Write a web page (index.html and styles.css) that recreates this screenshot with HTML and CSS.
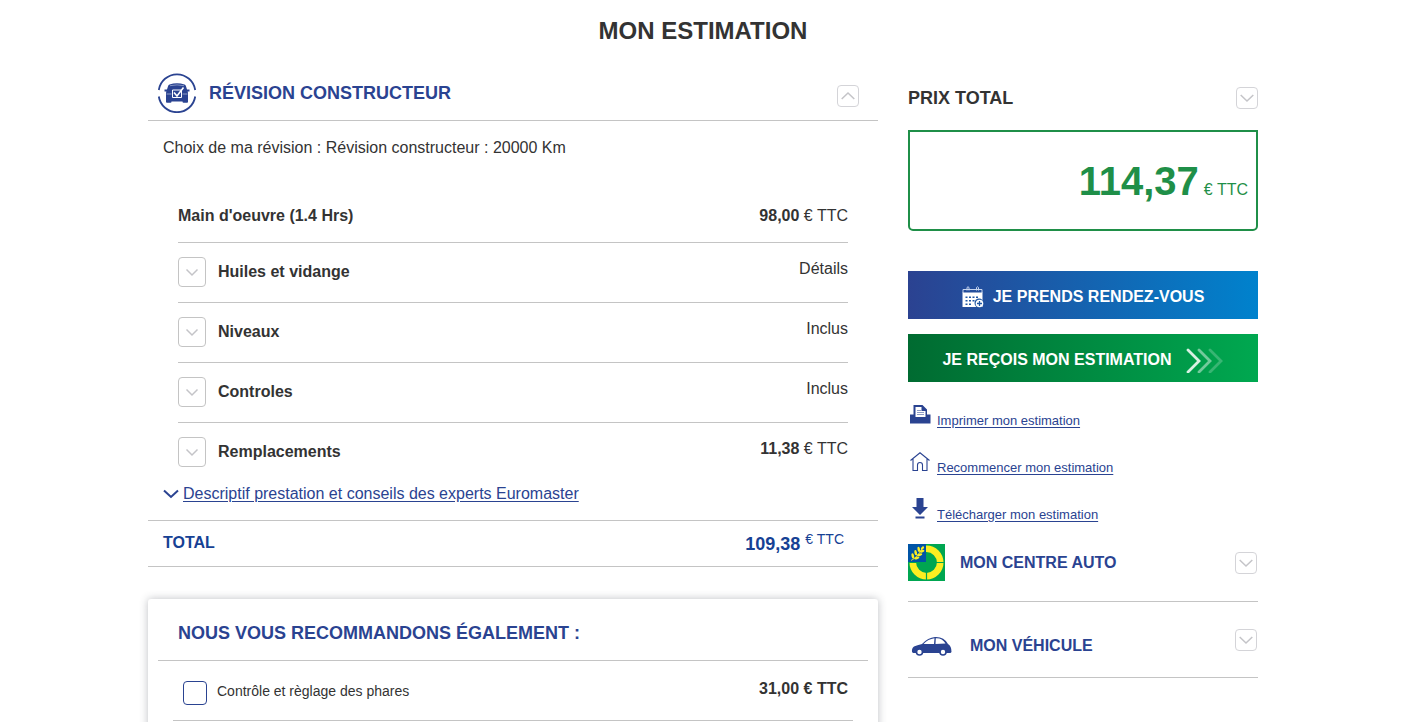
FILE: index.html
```
<!DOCTYPE html>
<html lang="fr">
<head>
<meta charset="utf-8">
<title>Mon estimation</title>
<link rel="stylesheet" href="styles.css">
</head>
<body>
<div class="page">
  <h1 class="page-title">MON ESTIMATION</h1>
  <div class="layout">
    <main class="main">
      <section>
        <header class="section-head">
          <svg class="revision-icon" viewBox="0 0 40 40" aria-hidden="true">
            <g fill="none" stroke="#2a4391" stroke-width="1.8"><path d="M1.800 17A18.400 18.400 0 0 1 38.200 17"/><path d="M1.800 23.500A18.400 18.400 0 0 0 38.200 23.500"/></g>
            <path fill="#2a4391" d="M12.500 11.500q7.500-2.500 15 0 1 .3 1.400 1.500l1.600 5 .5 2v9q0 .8-1 .8h-3.500q-1 0-1-1.300h-11q0 1.300-1 1.300H10q-1 0-1-.8v-9l.5-2 1.600-5q.4-1.200 1.400-1.500zM7.500 16.500h3v2h-3zM29.500 16.500h3v2h-3z"/>
            <path d="M13 12.700q7-1.600 14 0" fill="none" stroke="#a9b5d6" stroke-width=".7"/>
            <path d="M9.500 21h5M25.500 21h5" stroke="#a9b5d6" stroke-width=".8"/>
            <path d="M15.500 17h9v7.500h-9z" fill="#2a4391" stroke="#fff"/>
            <path d="M17 19.500l3 3.500 6.500-8.500" fill="none" stroke="#fff" stroke-width="1.600"/>
          </svg>
          <h2 class="heading">RÉVISION CONSTRUCTEUR</h2>
          <button class="toggle toggle-top" type="button" aria-label="Replier"><svg viewBox="0 0 14 8" width="14" height="8"><path d="M.7 7L7 1l6.300 6"/></svg></button>
        </header>
        <p class="choice">Choix de ma révision : Révision constructeur : 20000 Km</p>
        <ul class="rows">
          <li class="row labour"><strong>Main d'oeuvre (1.4 Hrs)</strong><span><b>98,00</b> € TTC</span></li>
          <li class="row"><button class="expand" type="button" aria-label="Déplier Huiles et vidange"><svg viewBox="0 0 12 7" width="12" height="7"><path d="M.5 .5L6 6l5.500-5.500"/></svg></button><strong class="label">Huiles et vidange</strong><span class="value">Détails</span></li>
          <li class="row"><button class="expand" type="button" aria-label="Déplier Niveaux"><svg viewBox="0 0 12 7" width="12" height="7"><path d="M.5 .5L6 6l5.500-5.500"/></svg></button><strong class="label">Niveaux</strong><span class="value">Inclus</span></li>
          <li class="row"><button class="expand" type="button" aria-label="Déplier Controles"><svg viewBox="0 0 12 7" width="12" height="7"><path d="M.5 .5L6 6l5.500-5.500"/></svg></button><strong class="label">Controles</strong><span class="value">Inclus</span></li>
          <li class="row"><button class="expand" type="button" aria-label="Déplier Remplacements"><svg viewBox="0 0 12 7" width="12" height="7"><path d="M.5 .5L6 6l5.500-5.500"/></svg></button><strong class="label">Remplacements</strong><span class="value"><b>11,38</b> € TTC</span></li>
        </ul>
        <p class="advice"><svg viewBox="0 0 16 10" width="16" height="10" aria-hidden="true"><path d="M1 1.500L8 8l7-6.500" fill="none" stroke="#2a4391" stroke-width="2"/></svg><a href="#">Descriptif prestation et conseils des experts Euromaster</a></p>
        <div class="total"><strong>TOTAL</strong><span class="total-price"><b>109,38</b><span class="total-unit">€ TTC</span></span></div>
      </section>
      <section class="card">
        <h2 class="heading card-title">NOUS VOUS RECOMMANDONS ÉGALEMENT :</h2>
        <div class="option">
          <input class="check" type="checkbox" id="phares">
          <label for="phares">Contrôle et règlage des phares</label>
          <b class="option-price">31,00 € TTC</b>
        </div>
      </section>
    </main>
    <aside class="side">
      <header class="side-head">
        <h2 class="heading dark">PRIX TOTAL</h2>
        <button class="toggle" type="button" aria-label="Déplier le prix total"><svg viewBox="0 0 14 8" width="14" height="8"><path d="M.7 1L7 7l6.300-6"/></svg></button>
      </header>
      <p class="price"><b>114,37</b><span>€ TTC</span></p>
      <button class="cta blue" type="button">
        <svg viewBox="0 0 22 22" width="22" height="22" aria-hidden="true">
          <path d="M1 7V3.500h19V7" fill="none" stroke="#c7d5ee"/>
          <path d="M5 4.500V1.500q1-1.500 2 0v3M14.500 4.500V1.500q1-1.500 2 0v3" fill="none" stroke="#c7d5ee"/>
          <path fill="#fff" d="M.5 6.500h20V21H.5z"/>
          <path fill="#2057a3" d="M3.500 10.500h2v1.500h-2zM7 10.500h2v1.500H7zM10.500 10.500h2v1.500h-2zM14 10.500h2v1.500h-2zM3.500 14h2v1.500h-2zM7 14h2v1.500H7zM10.500 14h2v1.500h-2zM3.500 17.500h2V19h-2zM7 17.500h2V19H7z"/>
          <circle cx="17" cy="17" r="4.500" fill="#2057a3"/>
          <circle cx="17.500" cy="17.500" r="3.800" fill="#fff"/>
          <path d="M15 17.500h5M17.500 15v5" stroke="#2057a3" stroke-width="1.300"/>
        </svg>JE PRENDS RENDEZ-VOUS</button>
      <button class="cta green" type="button">JE REÇOIS MON ESTIMATION
        <svg viewBox="0 0 38 26" width="38" height="26" aria-hidden="true"><g fill="none" stroke="#fff" stroke-width="2.800" stroke-linecap="round"><path d="M2 3l11 11L2 25" opacity=".85"/><path d="M13 3l11 11-11 11" opacity=".45"/><path d="M24 3l11 11-11 11" opacity=".22"/></g></svg></button>
      <ul class="actions">
        <li><svg viewBox="0 0 22 22" width="22" height="22" aria-hidden="true"><path fill="#2a4391" d="M1 10.500h3.500V1h9l4.500 4.500v5h3.500v9H1z"/><path d="M6.500 3h6v4h4v6h-10z" fill="#fff"/><path d="M8 6.500h4M8 8.500h7M8 10.500h7" stroke="#8d9bc6"/></svg><a href="#">Imprimer mon estimation</a></li>
        <li><svg viewBox="0 0 22 22" width="22" height="22" aria-hidden="true"><path d="M1.500 9.500L11 1.700l9.500 7.800M4 8v11.500h4.500V14q0-2.500 2.500-2.500t2.500 2.500v5.500H18V8" fill="none" stroke="#2a4391" stroke-width="1.100"/></svg><a href="#">Recommencer mon estimation</a></li>
        <li><svg viewBox="0 0 22 22" width="22" height="22" aria-hidden="true"><path fill="#2a4391" d="M7.500 0h7v9H19l-8 8-8-8h4.500zM6.500 18.500h9V20.500h-9z"/></svg><a href="#">Télécharger mon estimation</a></li>
      </ul>
      <section class="panel centre">
        <svg viewBox="0 0 37 37" width="37" height="37" aria-hidden="true">
          <path fill="#00a651" d="M0 0h37v37H0z"/>
          <circle cx="18.500" cy="18.500" r="13.700" fill="none" stroke="#fcee21" stroke-width="6.600"/>
          <path fill="#00a651" d="M17.900 25h1.200v12h-1.200zM0 17.900h37v1.200H0z"/>
          <path fill="#0054a6" d="M0 0h18v18H0z"/>
          <path d="M3 16.500Q9 14 15 3" stroke="#fcee21" stroke-width=".8" fill="none"/>
          <g fill="#fcee21"><ellipse cx="4.800" cy="12" rx="1.300" ry="2.700" transform="rotate(-12 4.800 12)"/><ellipse cx="7.700" cy="8.700" rx="1.300" ry="2.700" transform="rotate(-12 7.700 8.700)"/><ellipse cx="10.800" cy="5.400" rx="1.300" ry="2.700" transform="rotate(-12 10.800 5.400)"/><ellipse cx="8.800" cy="14" rx="2.700" ry="1.300" transform="rotate(-15 8.800 14)"/><ellipse cx="11.700" cy="10.700" rx="2.700" ry="1.300" transform="rotate(-15 11.700 10.700)"/><ellipse cx="14" cy="7.200" rx="2.500" ry="1.300" transform="rotate(-15 14 7.200)"/><ellipse cx="14.500" cy="4" rx="1.200" ry="2" transform="rotate(40 14.500 4)"/></g>
        </svg>
        <h3>MON CENTRE AUTO</h3>
        <button class="toggle" type="button" aria-label="Déplier mon centre auto"><svg viewBox="0 0 14 8" width="14" height="8"><path d="M.7 1L7 7l6.300-6"/></svg></button>
      </section>
      <section class="panel vehicle">
        <svg viewBox="0 0 42 20" width="42" height="20" aria-hidden="true">
          <path fill="#2a4391" d="M1 16q-.5-4 2-5.500 3-1.500 8-2.500 6-6.500 13-7 9-.5 13 7 3.500 2 3.500 8l-1 1H2z"/>
          <path fill="#fff" d="M12.500 8Q17 3 23.500 2.200L23 8zM24.800 2.200Q31 1.700 34.500 7.500L24.500 8z"/>
          <g fill="#fff" stroke="#2a4391" stroke-width="1.600"><circle cx="8.500" cy="16" r="3"/><circle cx="32" cy="16" r="3"/></g>
        </svg>
        <h3>MON VÉHICULE</h3>
        <button class="toggle" type="button" aria-label="Déplier mon véhicule"><svg viewBox="0 0 14 8" width="14" height="8"><path d="M.7 1L7 7l6.300-6"/></svg></button>
      </section>
    </aside>
  </div>
</div>
</body>
</html>
```

FILE: styles.css
```
* { box-sizing: border-box; }
body {
  margin: 0;
  background: #fff;
  color: #333;
  font: 16px/20px "Liberation Sans", Arial, sans-serif;
}
h1, h2, h3, p, ul { margin: 0; padding: 0; }
ul { list-style: none; }
button { padding: 0; font: inherit; cursor: pointer; }
a { color: #2a4391; text-decoration: underline; text-underline-offset: 2px; }
svg { flex: none; }

.page { height: 100vh; overflow: hidden; }
.page-title {
  padding-top: 17px;
  font-size: 24px;
  line-height: 28px;
  text-align: center;
}
.layout {
  display: grid;
  grid-template-columns: repeat(12, minmax(0, 1fr));
  column-gap: 30px;
  max-width: 1140px;
  margin: 0 auto;
  padding: 28px 15px 0;
}
.main { grid-column: span 8; }
.side { grid-column: span 4; }

.heading { color: #2a4391; font-size: 18px; line-height: 20px; }
.dark { color: #333; }

.section-head {
  display: flex;
  align-items: center;
  padding: 0 19px 7px 9px;
  border-bottom: 1px solid #c4c4c4;
}
.revision-icon { width: 40px; height: 40px; margin-right: 12px; }

.toggle, .expand {
  display: flex;
  align-items: center;
  justify-content: center;
  background: #fff;
  border: 1px solid #d4d4d8;
}
.toggle { width: 22px; height: 22px; margin-left: auto; border-radius: 4px; }
.toggle-top { align-self: flex-end; margin-bottom: 6px; }
.toggle svg, .expand svg { fill: none; stroke: #c4c4c8; stroke-width: 1.5; overflow: visible; }

.choice { padding: 17px 15px 0; }

.rows { padding: 47px 30px 0; }
.row {
  display: flex;
  padding: 14px 0 15px;
  border-bottom: 1px solid #c4c4c4;
}
.row:last-child { border-bottom: 0; }
.labour { justify-content: space-between; padding: 1px 0 16px; }
.expand { width: 28px; height: 30px; border-color: #c4c4c4; border-radius: 4px; }
.label { margin: 5px 0 5px 12px; }
.value { margin: 2px 0 8px auto; }

.advice {
  display: flex;
  align-items: center;
  gap: 4px;
  padding: 2px 15px 16px;
  border-bottom: 1px solid #c4c4c4;
}
.total {
  display: flex;
  justify-content: space-between;
  padding: 12px 34px 12px 15px;
  border-bottom: 1px solid #c4c4c4;
  color: #164194;
}
.total-price { display: flex; gap: 5px; }
.total-price b { padding-top: 1px; font-size: 18px; }
.total-unit { font-size: 14px; line-height: 12px; }

.card {
  margin-top: 32px;
  padding: 24px 10px 30px;
  border-radius: 3px;
  box-shadow: 0 0 8px rgba(40, 45, 60, .3);
}
.card-title { padding: 0 20px 17px; border-bottom: 1px solid #c4c4c4; }
.option {
  display: flex;
  align-items: flex-start;
  margin: 0 15px;
  padding: 20px 5px 15px 10px;
  border-bottom: 1px solid #c4c4c4;
  font-size: 14px;
}
.check {
  appearance: none;
  width: 24px;
  height: 24px;
  margin: 0 10px 0 0;
  border: 1px solid #2a4391;
  border-radius: 4px;
}
.option-price { margin: -2px 0 0 auto; font-size: 16px; }

.side-head { display: flex; align-items: center; padding-top: 14px; }
.price {
  display: flex;
  align-items: baseline;
  justify-content: flex-end;
  gap: 5px;
  margin: 21px 0 40px;
  padding: 27px 8px 26px;
  border: 2px solid #1f8f48;
  border-radius: 0 0 5px 5px;
  color: #1f8f48;
}
.price b { font-size: 40px; line-height: 44px; }
.cta {
  display: flex;
  align-items: center;
  justify-content: center;
  width: 100%;
  height: 48px;
  border: 0;
  color: #fff;
  font-weight: bold;
}
.blue { gap: 9px; padding-top: 3px; background: linear-gradient(90deg, #2b4291, #0082cd); }
.green { gap: 14px; margin-top: 15px; padding-top: 3px; background: linear-gradient(90deg, #006b31, #00a850); }

.actions { display: grid; gap: 19px; padding-top: 22px; }
.actions li { display: flex; align-items: flex-start; gap: 6px; padding-left: 1px; }
.actions a { padding-top: 7px; padding-bottom: 1px; font-size: 13px; line-height: 20px; }

.panel { display: flex; align-items: center; border-bottom: 1px solid #c4c4c4; color: #2a4391; padding-right: 1px; }
.panel h3 { font-size: 16px; line-height: 20px; }
.centre { gap: 15px; padding-top: 18px; padding-bottom: 20px; }
.vehicle { gap: 17px; padding: 27px 1px 14px 3px; }
.vehicle .toggle { margin-bottom: 12px; }
```
